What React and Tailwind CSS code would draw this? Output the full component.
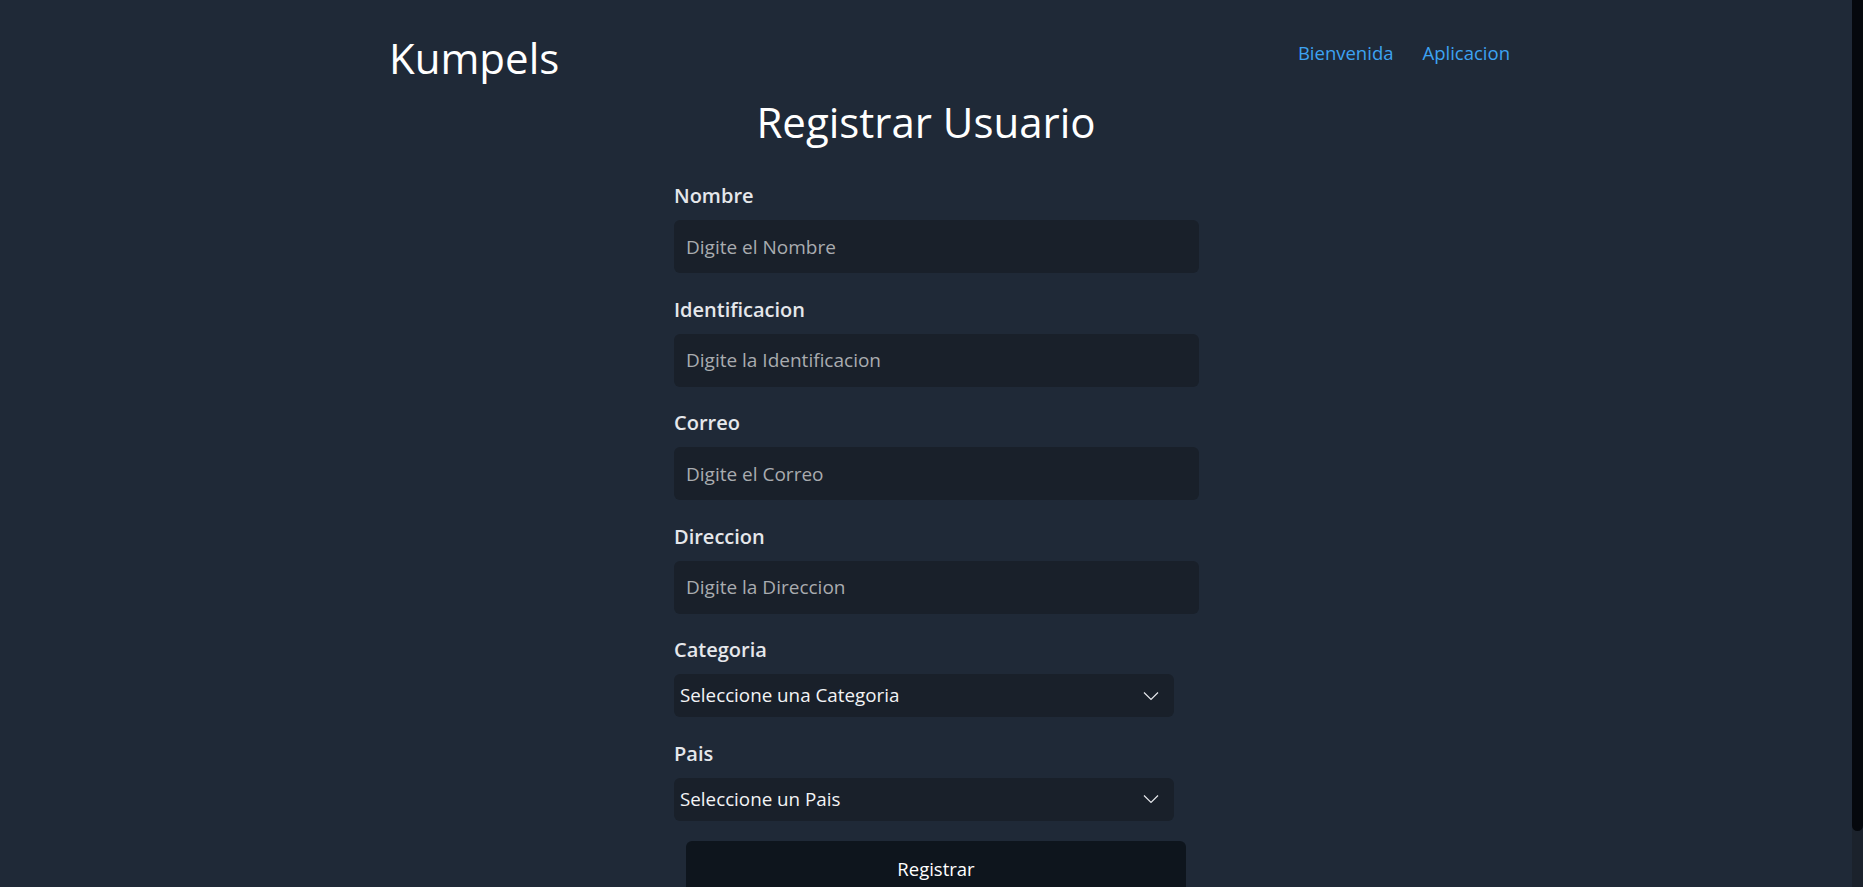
import { useState } from 'react';

const fields = [
  { label: 'Nombre', placeholder: 'Digite el Nombre' },
  { label: 'Identificacion', placeholder: 'Digite la Identificacion' },
  { label: 'Correo', placeholder: 'Digite el Correo' },
  { label: 'Direccion', placeholder: 'Digite la Direccion' },
];

const selects = [
  { label: 'Categoria', placeholder: 'Seleccione una Categoria' },
  { label: 'Pais', placeholder: 'Seleccione un Pais' },
];

function Chevron() {
  return (
    <svg width="16" height="9" viewBox="0 0 16 9" fill="none" className="pointer-events-none absolute right-[15px] top-1/2 -translate-y-1/2">
      <path d="M1 1L8 8L15 1" stroke="#e5e7eb" strokeWidth="1.2" />
    </svg>
  );
}

export default function App() {
  const [form, setForm] = useState({});

  const update = (key) => (e) => setForm({ ...form, [key]: e.target.value });

  return (
    <div className="flex min-h-screen bg-[#1f2937] font-['Open_Sans','Noto_Sans',sans-serif] text-white">
      <main className="flex-1">
        <header className="flex justify-between pl-[389px] pr-[342px] pt-[34px]">
          <h2 className="text-[42px] leading-[48px]">Kumpels</h2>
          <nav className="mt-[5px] flex gap-[29px] text-[18.5px] leading-7 text-[#3da3f2]">
            <a href="#">Bienvenida</a>
            <a href="#">Aplicacion</a>
          </nav>
        </header>

        <h1 className="mt-[16px] text-center text-[42px] leading-[48px]">Registrar Usuario</h1>

        <div className="flex justify-center pl-[21px] pb-[51px]">
          <form className="mt-[36px] flex w-[525px] flex-col gap-[22.5px]" onSubmit={(e) => e.preventDefault()}>
            {fields.map((f) => (
              <div key={f.label}>
                <label className="mb-[10px] block text-[20px] font-semibold leading-7 text-[#e5e7eb]">{f.label}</label>
                <input
                  type="text"
                  placeholder={f.placeholder}
                  value={form[f.label] || ''}
                  onChange={update(f.label)}
                  className="block h-[53px] w-full rounded-md bg-[#19202a] px-[12px] text-[19px] text-white outline-none placeholder:text-[#a9acb0]"
                />
              </div>
            ))}

            {selects.map((s) => (
              <div key={s.label}>
                <label className="mb-[10px] block text-[20px] font-semibold leading-7 text-[#e5e7eb]">{s.label}</label>
                <div className="relative w-[500px]">
                  <select
                    value={form[s.label] || ''}
                    onChange={update(s.label)}
                    className="block h-[43px] w-full appearance-none rounded-md bg-[#19202a] pl-[6px] text-[18.8px] text-[#f3f4f6] outline-none"
                  >
                    <option value="">{s.placeholder}</option>
                  </select>
                  <Chevron />
                </div>
              </div>
            ))}

            <button
              type="submit"
              className="-mt-[2.5px] ml-3 w-[500px] rounded-md bg-[#0e151d] py-[14px] text-[18.5px] leading-7 text-white"
            >
              Registrar
            </button>
          </form>
        </div>
      </main>

      {/* scrollbar del navegador */}
      <div className="sticky top-0 h-screen w-[11px] shrink-0 bg-[#1b222c]">
        <div className="h-[831px] rounded-b-[6px] bg-[#05080d]"></div>
      </div>
    </div>
  );
}
